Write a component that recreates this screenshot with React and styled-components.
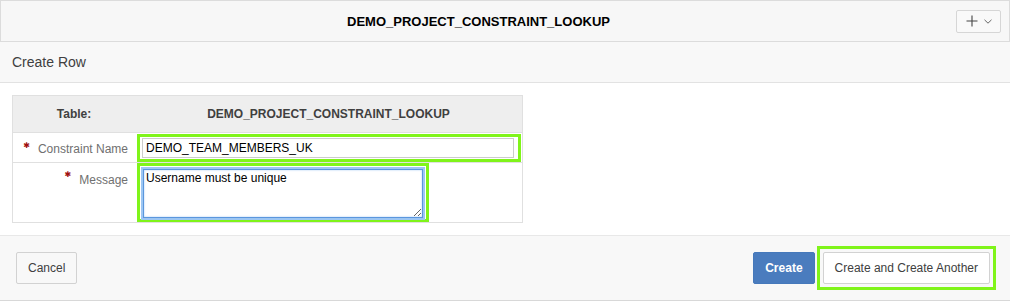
import React from 'react'
import styled, { createGlobalStyle } from 'styled-components'

const GlobalStyle = createGlobalStyle`
  body {
    margin: 0;
    background: #fff;
    font-family: "Liberation Sans", Arial, sans-serif;
  }
`

const TitleBar = styled.div`
  display: flex;
  align-items: center;
  height: 40px;
  border: 1px solid #dcdcdc;
  background: #f7f7f7;
  h1 {
    flex: 1;
    margin: 0;
    text-align: center;
    font-size: 13px;
    font-weight: bold;
    color: #000;
  }
`

const MenuButton = styled.button`
  display: flex;
  align-items: center;
  justify-content: center;
  gap: 6px;
  width: 45px;
  height: 23px;
  margin-right: 8px;
  padding: 0;
  border: 1px solid #d6d6d6;
  border-radius: 2px;
  background: #f9f9f9;
`

const SubHeader = styled.div`
  display: flex;
  align-items: center;
  height: 40px;
  padding: 0 12px;
  background: #f8f8f8;
  border-bottom: 1px solid #e2e2e2;
  font-size: 14px;
  color: #404040;
`

const Body = styled.div`
  padding: 12px 12px 12px;
`

const FormTable = styled.div`
  display: grid;
  grid-template-columns: 122px 1fr;
  width: 509px;
  border: 1px solid #e0e0e0;
`

const HeadCell = styled.div`
  display: flex;
  align-items: center;
  justify-content: center;
  height: 36px;
  background: #eeeeee;
  border-bottom: 1px solid #e0e0e0;
  font-size: 12px;
  font-weight: bold;
  color: #404040;
`

const LabelCell = styled.div`
  display: flex;
  justify-content: flex-end;
  align-items: ${p => (p.$top ? 'flex-start' : 'center')};
  padding: ${p => (p.$top ? '10px 7px 0 0' : '2px 7px 0 0')};
  border-bottom: ${p => (p.$last ? 'none' : '1px solid #e0e0e0')};
  font-size: 12px;
  color: #707070;
`

const Required = styled.span`
  color: #a01010;
  font-family: "DejaVu Sans", sans-serif;
  font-size: 8px;
  font-weight: bold;
  margin-right: 8px;
  position: relative;
  top: -3px;
`

const FieldCell = styled.div`
  padding: ${p => p.$pad};
  border-bottom: ${p => (p.$last ? 'none' : '1px solid #e0e0e0')};
`

const Highlight = styled.div`
  display: ${p => (p.$inline ? 'inline-block' : 'block')};
  border: 3px solid #80f41a;
  padding: ${p => p.$pad};
  line-height: 0;
`

const TextInput = styled.input`
  box-sizing: border-box;
  width: 100%;
  height: 20px;
  margin: 0;
  padding: 0 3px;
  border: 1px solid #cccccc;
  font-family: "Liberation Sans", Arial, sans-serif;
  font-size: 12px;
  color: #000;
  outline: none;
`

const TextArea = styled.textarea`
  box-sizing: border-box;
  width: 280px;
  height: 49px;
  margin: 0;
  padding: 1px 2px;
  border: 1px solid #5b97dd;
  box-shadow: 0 0 0 2px #9cc6f3, inset 0 0 2px #9cc6f3;
  font-family: "Liberation Sans", Arial, sans-serif;
  font-size: 12px;
  line-height: 14px;
  color: #000;
  outline: none;
  resize: both;
`

const Footer = styled.div`
  display: flex;
  align-items: center;
  padding: 10px 14px 10px 16px;
  background: #f8f8f8;
  border-top: 1px solid #e8e8e8;
  border-bottom: 1px solid #d8d8d8;
`

const Spacer = styled.div`
  flex: 1;
`

const Marker = styled.div`
  display: flex;
  margin-left: 2px;
  padding: 3px;
  border: 3px solid #80f41a;
`

const Button = styled.button`
  height: 32px;
  padding: 0 11px;
  border: 1px solid ${p => (p.$hot ? '#4679bb' : '#d2d2d2')};
  border-radius: 2px;
  background: ${p => (p.$hot ? '#4a7cbe' : p.$white ? '#fff' : '#f8f8f8')};
  color: ${p => (p.$hot ? '#fff' : '#404040')};
  font-family: "Liberation Sans", Arial, sans-serif;
  font-size: 12px;
  font-weight: ${p => (p.$hot ? 'bold' : 'normal')};
`

export default function App() {
  return (
    <>
      <GlobalStyle />
      <TitleBar>
        <h1>DEMO_PROJECT_CONSTRAINT_LOOKUP</h1>
        <MenuButton>
          <svg width="12" height="12" viewBox="0 0 12 12">
            <path d="M6 0.5V11.5M0.5 6H11.5" stroke="#444" strokeWidth="1.1" fill="none" />
          </svg>
          <svg width="8" height="5" viewBox="0 0 8 5">
            <path d="M0.5 0.8L4 4.2L7.5 0.8" stroke="#666" strokeWidth="1" fill="none" />
          </svg>
        </MenuButton>
      </TitleBar>
      <SubHeader>Create Row</SubHeader>
      <Body>
        <FormTable>
          <HeadCell>Table:</HeadCell>
          <HeadCell>DEMO_PROJECT_CONSTRAINT_LOOKUP</HeadCell>

          <LabelCell>
            <Required>✱</Required>Constraint Name
          </LabelCell>
          <FieldCell $pad="1px 1px 0 2px">
            <Highlight $pad="1px 4px 1px 2px">
              <TextInput defaultValue="DEMO_TEAM_MEMBERS_UK" />
            </Highlight>
          </FieldCell>

          <LabelCell $top $last>
            <Required>✱</Required>Message
          </LabelCell>
          <FieldCell $pad="0 0 0 2px" $last>
            <Highlight $inline $pad="3px 3px 1px 3px">
              <TextArea defaultValue="Username must be unique" />
            </Highlight>
          </FieldCell>
        </FormTable>
      </Body>
      <Footer>
        <Button>Cancel</Button>
        <Spacer />
        <Button $hot>Create</Button>
        <Marker>
          <Button $white>Create and Create Another</Button>
        </Marker>
      </Footer>
    </>
  )
}
